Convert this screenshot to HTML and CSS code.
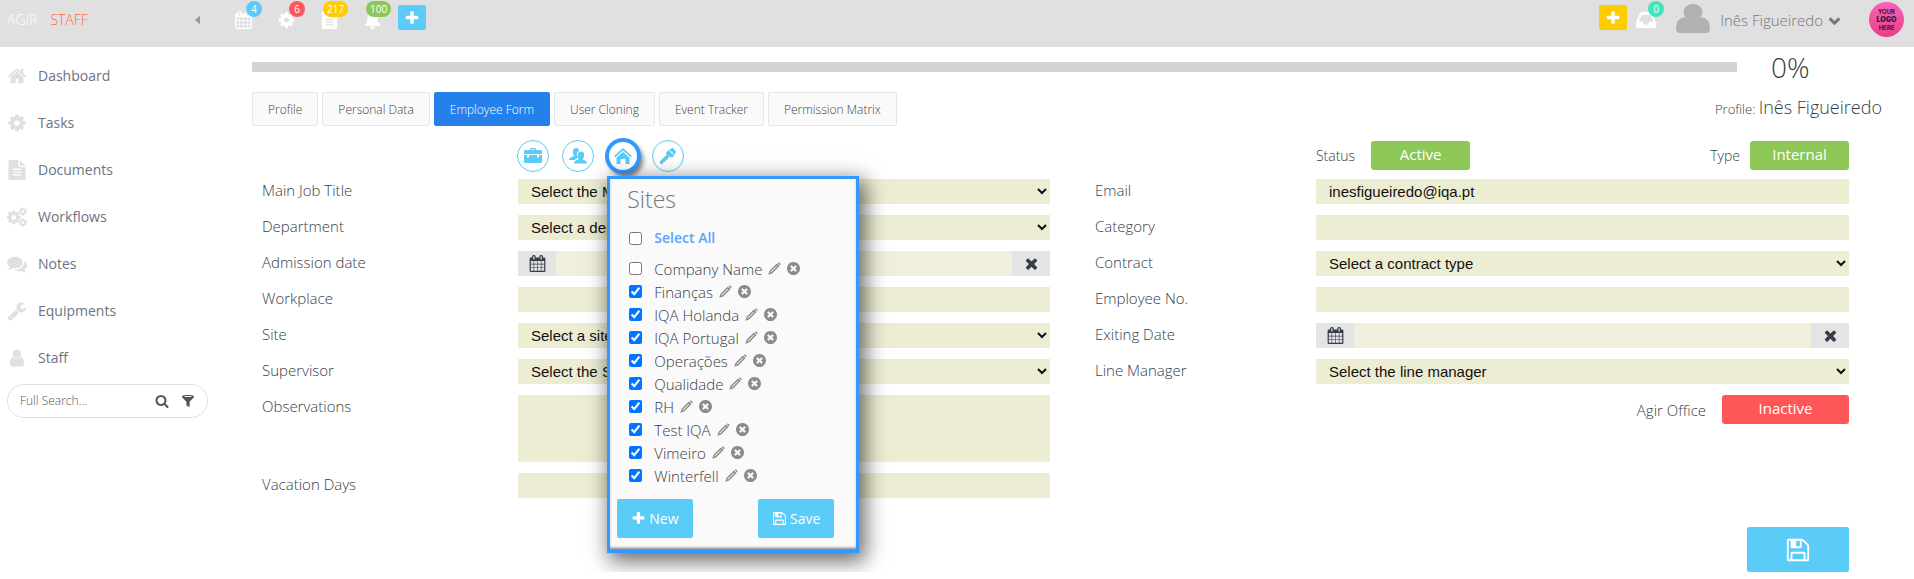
FILE: index.html
```html
<!DOCTYPE html>
<html lang="en">
<head>
    <meta charset="UTF-8">
    <meta name="viewport" content="width=device-width, initial-scale=1.0">
    <title>AGIR Staff - Employee Form</title>
    <link rel="stylesheet" href="styles.css">
</head>
<body>
    <!-- Icon definitions -->
    <svg class="icon-defs" aria-hidden="true">
        <symbol id="i-home" viewBox="0 0 1792 1792"><path d="M1472 992v480q0 26-19 45t-45 19h-384v-384h-256v384h-384q-26 0-45-19t-19-45v-480q0-1 .5-3t.5-3l575-474 575 474q1 2 1 6zm223-69l-62 74q-8 9-21 11h-3q-13 0-21-7l-692-577-692 577q-12 8-24 7-13-2-21-11l-62-74q-8-10-7-23.5t11-21.5l719-599q32-26 76-26t76 26l244 204v-195q0-14 9-23t23-9h192q14 0 23 9t9 23v408l219 182q10 8 11 21.5t-7 23.5z"/></symbol>
        <symbol id="i-cog" viewBox="0 0 1792 1792"><path id="cog-shape" d="M1152 896q0-106-75-181t-181-75-181 75-75 181 75 181 181 75 181-75 75-181zm512-109v222q0 12-8 23t-20 13l-185 28q-19 54-39 91 35 50 107 138 10 12 10 25t-9 23q-27 37-99 108t-94 71q-12 0-26-9l-138-108q-44 23-91 38-16 136-29 186-7 28-36 28h-222q-14 0-24.500-8.500t-11.500-21.500l-28-184q-49-16-90-37l-141 107q-10 9-25 9-14 0-25-11-126-114-165-168-7-10-7-23 0-12 8-23 15-21 51-66.500t54-70.500q-27-50-41-99l-183-27q-13-2-21-12.500t-8-23.500v-222q0-12 8-23t19-13l186-28q14-46 39-92-40-57-107-138-10-12-10-24 0-10 9-23 26-36 98.500-107.500t94.500-71.500q13 0 26 10l138 107q44-23 91-38 16-136 29-186 7-28 36-28h222q14 0 24.500 8.500t11.500 21.500l28 184q49 16 90 37l142-107q9-9 24-9 13 0 25 10 129 119 165 170 7 8 7 22 0 12-8 23-15 21-51 66.500t-54 70.500q26 50 41 98l183 28q13 2 21 12.500t8 23.500z"/></symbol>
        <symbol id="i-cogs" viewBox="0 0 1792 1792"><use href="#cog-shape" transform="translate(-130 190) scale(.82)"/><use href="#cog-shape" transform="translate(1000 -20) scale(.48)"/><use href="#cog-shape" transform="translate(1000 960) scale(.48)"/></symbol>
        <symbol id="i-file" viewBox="0 0 1792 1792"><path d="M1596 476q14 14 28 36h-472v-472q22 14 36 28zm-476 164h544v1056q0 40-28 68t-68 28h-1344q-40 0-68-28t-28-68v-1600q0-40 28-68t68-28h800v544q0 40 28 68t68 28zm160 736v-64q0-14-9-23t-23-9h-704q-14 0-23 9t-9 23v64q0 14 9 23t23 9h704q14 0 23-9t9-23zm0-256v-64q0-14-9-23t-23-9h-704q-14 0-23 9t-9 23v64q0 14 9 23t23 9h704q14 0 23-9t9-23zm0-256v-64q0-14-9-23t-23-9h-704q-14 0-23 9t-9 23v64q0 14 9 23t23 9h704q14 0 23-9t9-23z"/></symbol>
        <symbol id="i-comments" viewBox="0 0 1792 1792"><path d="M1408 768q0 139-94 257t-256.500 186.500-353.500 68.500q-86 0-176-16-124 88-278 128-36 9-86 16h-3q-11 0-20.500-8t-11.500-21q-1-3-1-6.500t.5-6.500 2-6l2.500-5 3.500-5.500 4-5 4.500-5 4-4.500q5-6 23-25t26-29.500 22.500-29 25-38.500 20.500-44q-124-72-195-177t-71-224q0-139 94-257t256.500-186.500 353.500-68.500 353.500 68.500 256.500 186.500 94 257zm384 256q0 120-71 224.500t-195 176.500q10 24 20.500 44t25 38.500 22.500 29 26 29.500 23 25q1 1 4 4.500t4.500 5 4 5 3.500 5.500l2.500 5 2 6 .5 6.500-1 6.500q-3 14-13 22t-22 7q-50-7-86-16-154-40-278-128-90 16-176 16-271 0-472-132 58 4 88 4 161 0 309-45t264-129q125-92 192-212t67-254q0-77-23-152 129 71 204 178t75 230z"/></symbol>
        <symbol id="i-wrench" viewBox="0 0 1792 1792"><path d="M448 1472q0-26-19-45t-45-19-45 19-19 45 19 45 45 19 45-19 19-45zm644-420l-682 682q-37 37-90 37-52 0-91-37l-106-108q-38-36-38-90 0-53 38-91l681-681q39 98 114.500 173.500t173.500 114.500zm634-435q0 39-23 106-47 134-164.500 217.500t-258.500 83.500q-185 0-316.500-131.500t-131.500-316.500 131.500-316.500 316.500-131.500q58 0 121.500 16.500t107.500 46.500q16 11 16 28t-16 28l-293 169v224l193 107q5-3 79-48.500t135.500-81 70.500-35.500q15 0 23.500 10t8.500 25z"/></symbol>
        <symbol id="i-user" viewBox="0 0 1792 1792"><path d="M1536 1399q0 109-62.500 187t-150.500 78h-854q-88 0-150.500-78t-62.500-187q0-85 8.500-160.500t31.500-152 58.500-131 94-89 134.500-34.500q131 128 313 128t313-128q76 0 134.500 34.500t94 89 58.500 131 31.500 152 8.500 160.500zm-256-887q0 159-112.500 271.500t-271.500 112.500-271.500-112.500-112.500-271.500 112.500-271.500 271.500-112.500 271.500 112.500 112.500 271.500z"/></symbol>
        <symbol id="i-plus" viewBox="0 0 1792 1792"><path d="M1600 736v192q0 40-28 68t-68 28h-416v416q0 40-28 68t-68 28h-192q-40 0-68-28t-28-68v-416h-416q-40 0-68-28t-28-68v-192q0-40 28-68t68-28h416v-416q0-40 28-68t68-28h192q40 0 68 28t28 68v416h416q40 0 68 28t28 68z"/></symbol>
        <symbol id="i-search" viewBox="0 0 1792 1792"><path d="M1216 832q0-185-131.500-316.500t-316.500-131.500-316.500 131.500-131.500 316.500 131.500 316.500 316.500 131.500 316.500-131.500 131.500-316.500zm512 832q0 52-38 90t-90 38q-54 0-90-38l-343-342q-179 124-399 124-143 0-273.500-55.500t-225-150-150-225-55.500-273.500 55.500-273.500 150-225 225-150 273.500-55.500 273.500 55.500 225 150 150 225 55.500 273.500q0 220-124 399l343 343q37 37 37 90z"/></symbol>
        <symbol id="i-filter" viewBox="0 0 14 14"><path fill-rule="evenodd" d="M1 2.500C1 .6 13 .6 13 2.500c0 .6-.3 1-.8 1.500L8.600 7.800V13l-3.200-1.600V7.800L1.800 4C1.300 3.500 1 3.100 1 2.500zm2 0c1.500.7 6.500.7 8 0-1.500-.6-6.500-.6-8 0z"/></symbol>
        <symbol id="i-calendar" viewBox="0 0 1792 1792"><path d="M192 1664h288v-288h-288v288zm352 0h320v-288h-320v288zm-352-352h288v-320h-288v320zm352 0h320v-320h-320v320zm-352-384h288v-288h-288v288zm736 736h320v-288h-320v288zm-384-736h320v-288h-320v288zm768 736h288v-288h-288v288zm-384-352h320v-320h-320v320zm-352-864v-288q0-13-9.500-22.500t-22.500-9.500h-64q-13 0-22.500 9.500t-9.500 22.500v288q0 13 9.500 22.500t22.500 9.500h64q13 0 22.500-9.500t9.500-22.500zm736 864h288v-320h-288v320zm-384-384h320v-288h-320v288zm384 0h288v-288h-288v288zm32-480v-288q0-13-9.500-22.500t-22.500-9.500h-64q-13 0-22.500 9.500t-9.500 22.500v288q0 13 9.500 22.500t22.500 9.500h64q13 0 22.500-9.500t9.500-22.500zm384-64v1280q0 52-38 90t-90 38h-1408q-52 0-90-38t-38-90v-1280q0-52 38-90t90-38h128v-96q0-66 47-113t113-47h64q66 0 113 47t47 113v96h384v-96q0-66 47-113t113-47h64q66 0 113 47t47 113v96h128q52 0 90 38t38 90z"/></symbol>
        <symbol id="i-times" viewBox="0 0 1792 1792"><path d="M1490 1322q0 40-28 68l-136 136q-28 28-68 28t-68-28l-294-294-294 294q-28 28-68 28t-68-28l-136-136q-28-28-28-68t28-68l294-294-294-294q-28-28-28-68t28-68l136-136q28-28 68-28t68 28l294 294 294-294q28-28 68-28t68 28l136 136q28 28 28 68t-28 68l-294 294 294 294q28 28 28 68z"/></symbol>
        <symbol id="i-remove" viewBox="128 128 1536 1536"><path d="M1277 1122q0-26-19-45l-181-181 181-181q19-19 19-45 0-27-19-46l-90-90q-19-19-46-19-26 0-45 19l-181 181-181-181q-19-19-45-19-27 0-46 19l-90 90q-19 19-19 46 0 26 19 45l181 181-181 181q-19 19-19 45 0 27 19 46l90 90q19 19 46 19 26 0 45-19l181-181 181 181q19 19 45 19 27 0 46-19l90-90q19-19 19-46zm387-226q0 209-103 385.500t-279.500 279.500-385.500 103-385.500-103-279.500-279.500-103-385.500 103-385.500 279.500-279.500 385.500-103 385.500 103 279.500 279.500 103 385.500z"/></symbol>
        <symbol id="i-save" viewBox="0 0 1792 1792"><path d="M512 1536h768v-384h-768v384zm896 0h128v-896q0-14-10-38.500t-20-34.500l-281-281q-10-10-34-20t-39-10v416q0 40-28 68t-68 28h-576q-40 0-68-28t-28-68v-416h-128v1280h128v-416q0-40 28-68t68-28h832q40 0 68 28t28 68v416zm-384-928v-320q0-13-9.500-22.500t-22.500-9.500h-192q-13 0-22.500 9.500t-9.500 22.500v320q0 13 9.500 22.500t22.500 9.500h192q13 0 22.500-9.500t9.500-22.500zm640 32v928q0 40-28 68t-68 28h-1344q-40 0-68-28t-28-68v-1344q0-40 28-68t68-28h928q40 0 88 20t76 48l280 280q28 28 48 76t20 88z"/></symbol>
        <symbol id="i-chevron" viewBox="0 0 12 12"><path d="M1.500 4 6 8.500 10.500 4" fill="none" stroke="currentColor" stroke-width="2.800"/></symbol>
        <symbol id="i-caret" viewBox="0 0 6 10"><path d="M6 0v10L0 5z"/></symbol>
        <symbol id="i-bell" viewBox="0 0 18 18"><path d="M9 0c.8 0 1.200.6 1.200 1.300 2.500.6 3.700 2.700 3.700 5.200 0 4 1.200 6 3.100 7.500 0 .8-.5 1-1 1H2c-.5 0-1-.2-1-1 1.900-1.500 3.100-3.500 3.100-7.500 0-2.500 1.200-4.600 3.700-5.200C7.800.6 8.200 0 9 0zM6.500 15.500h5C11.500 17 10.500 18 9 18s-2.500-1-2.500-2.500z"/></symbol>
        <symbol id="i-inbox" viewBox="0 0 20 18"><path fill-rule="evenodd" d="M4 2q.3-1 1.300-1h9.400q1 0 1.300 1l3.500 8q.5 1 .5 2v4q0 1-1 1H1q-1 0-1-1v-4q0-1 .5-2zm1.500 2-2.800 6.500h3.800l1.500 3h4l1.500-3h3.800L14.500 4z"/></symbol>
        <symbol id="i-pencil" viewBox="0 0 13 13"><path fill-rule="evenodd" d="M.3 12.700 1.600 8.800 8.900 1.500 11.500 4.100 4.200 11.400zM2.800 9.600l-.5 1.100 1.100-.5L9.300 4.300l-.6-.6zM9.600.9q.9-.9 1.900-.2l.8.800q.7 1-.2 1.900z"/></symbol>
        <symbol id="i-briefcase" viewBox="0 0 18 16"><path fill-rule="evenodd" d="M6 2V1.500Q6 0 7.500 0h3Q12 0 12 1.500V2h5q1 0 1 1v3H0V3q0-1 1-1zm1.300 0h3.400v-.7H7.300zM0 7h3v2.500h2V7h8v2.500h2V7h3v7q0 1-1 1H1q-1 0-1-1z"/></symbol>
        <symbol id="i-group" viewBox="0 0 18 16"><path d="M7 0c2 0 3.200 1.300 3.200 3-2 .7-2.700 2.300-2.200 4.600.2.900.6 1.500 1 2L5.500 12H0q0-2 2-2.700l2.500-1q.8-.4.200-1.300C3.500 5 3.300 0 7 0z"/><path d="M12 3.500c3.500 0 4 4 2.300 6.700-.6 1-.4 1.400.4 1.800l2 .8Q18 13.400 18 15.500H5q0-2 1.500-2.700l2.500-1q1-.5.400-1.600C8 7.500 8.500 3.500 12 3.500z"/></symbol>
        <symbol id="i-house" viewBox="0 0 18 16"><path d="M9 0l9 8-1.200 1.300L9 2.600 1.200 9.300 0 8zM9 4l6.500 5.500V16h-4v-5h-5v5h-4V9.500z"/></symbol>
        <symbol id="i-key" viewBox="0 0 18 18"><path fill-rule="evenodd" d="M9 3 12.500.5q1.500-1 2.700.2l2.200 2.500q1 1.200-.1 2.600L14.500 10q-1 1.200-2.200.4L11 9.400 9 11.500 8.500 13l-1.700.4-.4 1.700-1.700.4L2.500 18H0v-3L7.600 7.700 7 6.500q-.5-1.200.4-2zm2.500-.2-.8.800 3.800 3.800.8-1z"/></symbol>
    </svg>

    <!-- Top bar -->
    <header class="topbar">
        <a class="brand" href="#"><span>AGIR</span> <span class="brand-module">STAFF</span></a>
        <button class="collapse" type="button" aria-label="Collapse menu"><svg><use href="#i-caret"/></svg></button>
        <nav class="alerts" aria-label="Alerts">
            <a class="alert" href="#" aria-label="Calendar"><svg><use href="#i-calendar"/></svg><span class="badge blue">4</span></a>
            <a class="alert" href="#" aria-label="Tasks"><svg><use href="#i-cog"/></svg><span class="badge red">6</span></a>
            <a class="alert" href="#" aria-label="Documents"><svg><use href="#i-file"/></svg><span class="badge yellow">217</span></a>
            <a class="alert" href="#" aria-label="Notifications"><svg><use href="#i-bell"/></svg><span class="badge green">100</span></a>
        </nav>
        <button class="add blue" type="button" aria-label="Add"><svg><use href="#i-plus"/></svg></button>
        <div class="account">
            <button class="add yellow" type="button" aria-label="Add request"><svg><use href="#i-plus"/></svg></button>
            <a class="alert inbox" href="#" aria-label="Inbox"><svg><use href="#i-inbox"/></svg><span class="badge teal">0</span></a>
            <svg class="avatar" viewBox="0 0 34 30"><ellipse cx="17" cy="8" rx="9.500" ry="8"/><path d="M9 13q8 6 16 0 9 1 9 12 0 4-4 4H4q-4 0-4-4 0-11 9-12z"/></svg>
            <button class="user-menu" type="button">Inês Figueiredo <svg><use href="#i-chevron"/></svg></button>
            <div class="logo"><span>YOUR</span><b>LOGO</b><span>HERE</span></div>
        </div>
    </header>

    <div class="page">
        <!-- Side menu -->
        <aside class="sidebar">
            <nav>
                <a href="#"><svg><use href="#i-home"/></svg>Dashboard</a>
                <a href="#"><svg><use href="#i-cog"/></svg>Tasks</a>
                <a href="#"><svg><use href="#i-file"/></svg>Documents</a>
                <a href="#"><svg><use href="#i-cogs"/></svg>Workflows</a>
                <a href="#"><svg><use href="#i-comments"/></svg>Notes</a>
                <a href="#"><svg><use href="#i-wrench"/></svg>Equipments</a>
                <a href="#"><svg><use href="#i-user"/></svg>Staff</a>
            </nav>
            <form class="search">
                <input type="text" placeholder="Full Search..." aria-label="Full Search">
                <button type="button" aria-label="Search"><svg><use href="#i-search"/></svg></button>
                <button type="button" aria-label="Filter"><svg><use href="#i-filter"/></svg></button>
            </form>
        </aside>

        <main class="content">
            <div class="progress">
                <div class="progress-bar"></div>
                <span class="progress-value">0%</span>
            </div>

            <div class="tab-row">
                <nav class="tabs">
                    <a href="#">Profile</a>
                    <a href="#">Personal Data</a>
                    <a class="active" href="#">Employee Form</a>
                    <a href="#">User Cloning</a>
                    <a href="#">Event Tracker</a>
                    <a href="#">Permission Matrix</a>
                </nav>
                <p class="profile">Profile: <span>Inês Figueiredo</span></p>
            </div>

            <!-- Employee form -->
            <div class="form">
                <div class="tools">
                    <button class="tool" type="button" aria-label="Job titles"><svg><use href="#i-briefcase"/></svg></button>
                    <button class="tool" type="button" aria-label="Departments"><svg><use href="#i-group"/></svg></button>
                    <div class="tool-wrap">
                        <button class="tool selected" type="button" aria-label="Sites"><svg><use href="#i-house"/></svg></button>
                        <!-- Sites popup -->
                        <section class="popup">
                            <h2>Sites</h2>
                            <label class="select-all"><input type="checkbox"> Select All</label>
                            <ul class="sites">
                                <li><label><input type="checkbox"> Company Name</label><button type="button" aria-label="Edit"><svg><use href="#i-pencil"/></svg></button><button type="button" aria-label="Delete"><svg><use href="#i-remove"/></svg></button></li>
                                <li><label><input type="checkbox" checked> Finanças</label><button type="button" aria-label="Edit"><svg><use href="#i-pencil"/></svg></button><button type="button" aria-label="Delete"><svg><use href="#i-remove"/></svg></button></li>
                                <li><label><input type="checkbox" checked> IQA Holanda</label><button type="button" aria-label="Edit"><svg><use href="#i-pencil"/></svg></button><button type="button" aria-label="Delete"><svg><use href="#i-remove"/></svg></button></li>
                                <li><label><input type="checkbox" checked> IQA Portugal</label><button type="button" aria-label="Edit"><svg><use href="#i-pencil"/></svg></button><button type="button" aria-label="Delete"><svg><use href="#i-remove"/></svg></button></li>
                                <li><label><input type="checkbox" checked> Operações</label><button type="button" aria-label="Edit"><svg><use href="#i-pencil"/></svg></button><button type="button" aria-label="Delete"><svg><use href="#i-remove"/></svg></button></li>
                                <li><label><input type="checkbox" checked> Qualidade</label><button type="button" aria-label="Edit"><svg><use href="#i-pencil"/></svg></button><button type="button" aria-label="Delete"><svg><use href="#i-remove"/></svg></button></li>
                                <li><label><input type="checkbox" checked> RH</label><button type="button" aria-label="Edit"><svg><use href="#i-pencil"/></svg></button><button type="button" aria-label="Delete"><svg><use href="#i-remove"/></svg></button></li>
                                <li><label><input type="checkbox" checked> Test IQA</label><button type="button" aria-label="Edit"><svg><use href="#i-pencil"/></svg></button><button type="button" aria-label="Delete"><svg><use href="#i-remove"/></svg></button></li>
                                <li><label><input type="checkbox" checked> Vimeiro</label><button type="button" aria-label="Edit"><svg><use href="#i-pencil"/></svg></button><button type="button" aria-label="Delete"><svg><use href="#i-remove"/></svg></button></li>
                                <li><label><input type="checkbox" checked> Winterfell</label><button type="button" aria-label="Edit"><svg><use href="#i-pencil"/></svg></button><button type="button" aria-label="Delete"><svg><use href="#i-remove"/></svg></button></li>
                            </ul>
                            <div class="popup-actions">
                                <button type="button"><svg><use href="#i-plus"/></svg>New</button>
                                <button type="button"><svg><use href="#i-save"/></svg>Save</button>
                            </div>
                        </section>
                    </div>
                    <button class="tool" type="button" aria-label="Keys"><svg><use href="#i-key"/></svg></button>
                </div>
                <div class="states">
                    <div class="state"><span>Status</span><button class="pill green" type="button">Active</button></div>
                    <div class="state"><span>Type</span><button class="pill green" type="button">Internal</button></div>
                </div>

                <div class="fields fields-left">
                    <label for="job">Main Job Title</label>
                    <select id="job"><option>Select the Main Job Title</option></select>
                    <label for="department">Department</label>
                    <select id="department"><option>Select a department</option></select>
                    <label for="admission">Admission date</label>
                    <div class="date">
                        <button type="button" aria-label="Pick admission date"><svg><use href="#i-calendar"/></svg></button>
                        <input id="admission" type="text">
                        <button type="button" aria-label="Clear admission date"><svg><use href="#i-times"/></svg></button>
                    </div>
                    <label for="workplace">Workplace</label>
                    <input id="workplace" type="text">
                    <label for="site">Site</label>
                    <select id="site"><option>Select a site</option></select>
                    <label for="supervisor">Supervisor</label>
                    <select id="supervisor"><option>Select the Supervisor</option></select>
                    <label for="observations">Observations</label>
                    <textarea id="observations"></textarea>
                    <label for="vacation">Vacation Days</label>
                    <input id="vacation" type="text">
                </div>

                <div class="right">
                    <div class="fields fields-right">
                        <label for="email">Email</label>
                        <input id="email" type="text" value="inesfigueiredo@iqa.pt">
                        <label for="category">Category</label>
                        <input id="category" type="text">
                        <label for="contract">Contract</label>
                        <select id="contract"><option>Select a contract type</option></select>
                        <label for="number">Employee No.</label>
                        <input id="number" type="text">
                        <label for="exiting">Exiting Date</label>
                        <div class="date">
                            <button type="button" aria-label="Pick exiting date"><svg><use href="#i-calendar"/></svg></button>
                            <input id="exiting" type="text">
                            <button type="button" aria-label="Clear exiting date"><svg><use href="#i-times"/></svg></button>
                        </div>
                        <label for="manager">Line Manager</label>
                        <select id="manager"><option>Select the line manager</option></select>
                    </div>
                    <div class="state office"><span>Agir Office</span><button class="pill wide red" type="button">Inactive</button></div>
                    <button class="save" type="button" aria-label="Save"><svg><use href="#i-save"/></svg></button>
                </div>
            </div>
        </main>
    </div>
</body>
</html>
```

FILE: styles.css
```css
/* Reset and body styling */
* {
    margin: 0;
    padding: 0;
    box-sizing: border-box;
}

body {
    font-family: "Open Sans", "Noto Sans", sans-serif;
    font-size: 15px;
    font-weight: 300;
    line-height: 20px;
    color: #373d48;
    background-color: #fff;
}

a {
    color: inherit;
    text-decoration: none;
}

button {
    font: inherit;
    color: inherit;
    border: none;
    background: none;
    cursor: pointer;
}

svg {
    display: block;
    fill: currentColor;
    flex: none;
}

.icon-defs {
    position: absolute;
    width: 0;
    height: 0;
}

/* Colours */
.blue {
    background-color: #5bcbf7;
}

.red {
    background-color: #ff5757;
}

.yellow {
    background-color: #ffcc00;
}

.green {
    background-color: #8dc857;
}

.teal {
    background-color: #40e4c0;
}

/* Top bar */
.topbar {
    display: flex;
    align-items: flex-start;
    height: 47px;
    padding: 0 10px 0 7px;
    background-color: #e0e0e0;
}

.brand {
    display: flex;
    gap: 13px;
    width: 188px;
    padding-top: 10px;
    color: #fff;
    font-size: 14px;
}

.brand-module {
    color: #ff6b4a;
}

.collapse {
    padding-top: 15px;
    color: #999;
}

.collapse svg {
    width: 5px;
    height: 10px;
}

.alerts {
    display: flex;
    gap: 24px;
    margin: 11px 16px 0 34px;
}

.alert {
    position: relative;
    color: #fff;
}

.alert svg {
    width: 19px;
    height: 18px;
}

.badge {
    position: absolute;
    left: 12px;
    top: -10px;
    min-width: 16px;
    padding: 0 4px;
    border-radius: 8px;
    font-size: 10px;
    font-weight: 400;
    line-height: 16px;
    text-align: center;
}

.badge.yellow,
.badge.green {
    left: 3px;
}

.add {
    display: flex;
    align-items: center;
    justify-content: center;
    width: 28px;
    height: 25px;
    margin-top: 5px;
    border-radius: 2px;
    color: #fff;
}

.add svg {
    width: 16px;
    height: 16px;
}

.account {
    display: flex;
    align-items: flex-start;
    margin-left: auto;
}

.inbox {
    margin: 11px 20px 0 9px;
}

.inbox svg {
    width: 20px;
}

.avatar {
    width: 34px;
    height: 30px;
    margin: 4px 10px 0 0;
    color: #b1b1b1;
}

.user-menu {
    display: flex;
    align-items: center;
    gap: 5px;
    margin: 10px 28px 0 0;
    color: #777;
}

.user-menu svg {
    width: 13px;
    height: 13px;
}

.logo {
    display: flex;
    flex-direction: column;
    align-items: center;
    justify-content: center;
    width: 35px;
    height: 35px;
    margin-top: 2px;
    border-radius: 50%;
    background: linear-gradient(#f564b8, #ee3d86);
    color: #3a1535;
    font-family: "Inter", sans-serif;
    font-size: 6px;
    font-weight: 700;
    line-height: 8px;
}

.logo b {
    font-size: 7px;
    font-weight: 900;
}

/* Page layout */
.page {
    display: flex;
}

.sidebar {
    width: 252px;
    flex: none;
    padding: 5px 44px 0 7px;
}

.sidebar nav a {
    display: flex;
    align-items: center;
    gap: 11px;
    height: 47px;
    color: #6c7383;
    font-size: 14px;
    font-weight: 400;
}

.sidebar nav svg {
    width: 20px;
    height: 20px;
    color: #e0e0e0;
}

.search {
    display: flex;
    align-items: center;
    gap: 12px;
    height: 34px;
    margin-top: 3px;
    padding: 0 12px;
    border: 1px solid #e0e0e0;
    border-radius: 17px;
}

.search input {
    flex: 1;
    min-width: 0;
    border: none;
    outline: none;
    color: #555;
    font: inherit;
    font-size: 12px;
}

.search input::placeholder {
    color: #555;
}

.search svg {
    width: 14px;
    height: 14px;
    color: #555;
}

.content {
    flex: 1;
    min-width: 0;
}

/* Progress */
.progress {
    display: flex;
    align-items: center;
    height: 40px;
}

.progress-bar {
    flex: 1;
    height: 10px;
    background-color: #d3d3d3;
}

.progress-value {
    width: 177px;
    padding-left: 34px;
    font-size: 28px;
}

/* Tabs */
.tab-row {
    display: flex;
    justify-content: space-between;
    padding: 5px 32px 0 0;
}

.tabs {
    display: flex;
    gap: 4px;
}

.tabs a {
    height: 34px;
    padding: 0 15px;
    border: 1px solid #e6e7eb;
    border-radius: 2px;
    background-color: #fafafa;
    color: #444;
    font-size: 12px;
    line-height: 33px;
}

.tabs a.active {
    border-color: #2580ea;
    background-color: #2580ea;
    color: #fff;
}

.profile {
    padding-top: 5px;
    font-size: 13px;
}

.profile span {
    font-size: 18px;
}

/* Form */
.form {
    display: grid;
    grid-template-columns: 788fr 754fr;
    column-gap: 45px;
    padding: 14px 65px 0 10px;
}

.tools {
    display: flex;
    gap: 13px;
    height: 39px;
    margin-left: 32.400%;
}

.tool {
    display: flex;
    align-items: center;
    justify-content: center;
    width: 32px;
    height: 32px;
    border: 1px solid #5bcbf7;
    border-radius: 50%;
    background-color: #fff;
    color: #5bcbf7;
}

.tool svg {
    width: 18px;
    height: 16px;
}

.tool-wrap {
    position: relative;
}

.tool.selected {
    border: 2px solid #3399ff;
    box-shadow: 0 0 0 2px #3399ff, 3px 4px 5px 1px rgba(0, 0, 0, 0.5);
}

.states {
    display: flex;
    justify-content: space-between;
    padding: 1px 0 0 29.300%;
}

.state {
    display: flex;
    align-items: center;
    gap: 14px;
    height: 29px;
    font-size: 15px;
}

.states .state {
    font-size: 14px;
    gap: 16px;
}

.states .state:last-child {
    gap: 10px;
}

.pill {
    width: 99px;
    height: 29px;
    padding-bottom: 3px;
    border-radius: 3px;
    color: #fff;
    font-size: 15px;
    font-weight: 400;
}

.pill.wide {
    width: 127px;
}

.fields {
    display: grid;
    grid-auto-rows: minmax(25px, auto);
    row-gap: 11px;
    align-content: start;
}

.fields-left {
    grid-template-columns: 256fr 532fr;
}

.fields-right {
    grid-template-columns: 221fr 533fr;
}

.fields > label {
    line-height: 23px;
}

.fields input,
.fields select,
.fields textarea {
    display: block;
    width: 100%;
    min-width: 0;
    height: 25px;
    padding: 0 13px;
    border: none;
    border-radius: 0;
    outline: none;
    background-color: #ededd3;
    color: #111;
    font-family: "Liberation Sans", Arial, sans-serif;
    font-size: 15px;
}

.fields select {
    padding: 0 0 0 9px;
}

.fields textarea {
    height: 67px;
    resize: none;
}

.date {
    display: flex;
}

.date input {
    flex: 1;
    background-color: #f0efdb;
}

.date button {
    display: flex;
    align-items: center;
    justify-content: center;
    width: 38px;
    height: 25px;
    background-color: #e4e4e4;
}

.date svg {
    width: 17px;
    height: 17px;
}

.right {
    display: flex;
    flex-direction: column;
}

.office {
    align-self: flex-end;
    gap: 16px;
    margin-top: 11px;
}

.save {
    display: flex;
    align-items: center;
    justify-content: center;
    align-self: flex-end;
    width: 102px;
    height: 45px;
    margin-top: 103px;
    border-radius: 2px;
    background-color: #5bcbf7;
    color: #fff;
}

.save svg {
    width: 26px;
    height: 26px;
}

/* Sites popup */
.popup {
    position: absolute;
    top: 36px;
    left: 0;
    z-index: 10;
    width: 252px;
    padding: 7px 18px 12px 17px;
    border: 3px solid #3399ff;
    background-color: #fafafa;
    box-shadow: 4px 6px 20px 2px rgba(0, 0, 0, 0.6), inset 0 -3px 3px -1px rgba(0, 0, 0, 0.5);
}

.popup h2 {
    color: #777;
    font-size: 23px;
    font-weight: 300;
    line-height: 26px;
}

.popup label {
    display: flex;
    align-items: center;
    gap: 12px;
}

.popup input {
    width: 13px;
    height: 13px;
    margin-left: 2px;
}

.select-all {
    margin-top: 16px;
    color: #5ca2ff;
    font-size: 14px;
    font-weight: 600;
    line-height: 20px;
}

.sites {
    margin-top: 9px;
    list-style: none;
}

.sites li {
    display: flex;
    align-items: center;
    height: 23px;
}

.sites button {
    margin-left: 6px;
    color: #8b8b8b;
}

.sites button svg {
    width: 13px;
    height: 13px;
}

.popup-actions {
    display: flex;
    justify-content: space-between;
    margin: 12px 4px 0 -10px;
}

.popup-actions button {
    display: flex;
    align-items: center;
    gap: 3px;
    height: 39px;
    padding: 0 14px;
    border-radius: 2px;
    background-color: #5bcbf7;
    color: #fff;
    font-size: 14px;
    font-weight: 400;
}

.popup-actions svg {
    width: 15px;
    height: 15px;
}
```
